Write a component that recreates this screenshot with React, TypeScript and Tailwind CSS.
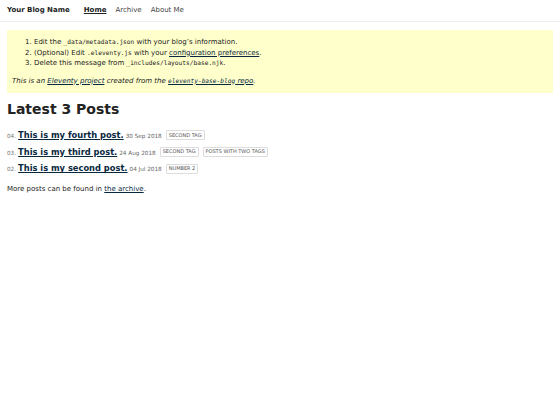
import React from 'react';

const posts = [
  { n: '04', title: 'This is my fourth post.', date: '30 Sep 2018', tags: ['second tag'] },
  { n: '03', title: 'This is my third post.', date: '24 Aug 2018', tags: ['second tag', 'posts with two tags'] },
  { n: '02', title: 'This is my second post.', date: '04 Jul 2018', tags: ['number 2'] },
];

export default function App() {
  return (
    <div className="min-h-screen bg-white text-[#222] font-['DejaVu_Sans',sans-serif] text-[7px] leading-[1.5]">
      {/* Header */}
      <header className="flex items-center h-[22px] px-[7px] border-b border-[#eee]">
        <a className="font-bold text-[#222] mr-[14px]">Your Blog Name</a>
        <nav className="flex gap-[9px]">
          <a className="font-bold underline text-[#222]">Home</a>
          <a className="text-[#444]">Archive</a>
          <a className="text-[#444]">About Me</a>
        </nav>
      </header>

      <main className="px-[7px]">
        {/* Warning box */}
        <div className="mt-[8px] bg-[#ffffcc] px-[5px] py-[7px]">
          <ol className="list-decimal pl-[22px]">
            <li>
              Edit the <code className="font-['DejaVu_Sans_Mono',monospace] text-[6.2px]">_data/metadata.json</code> with your blog’s information.
            </li>
            <li>
              (Optional) Edit <code className="font-['DejaVu_Sans_Mono',monospace] text-[6.2px]">.eleventy.js</code> with your{' '}
              <a className="underline text-[#082840]">configuration preferences</a>.
            </li>
            <li>
              Delete this message from <code className="font-['DejaVu_Sans_Mono',monospace] text-[6.2px]">_includes/layouts/base.njk</code>.
            </li>
          </ol>
          <p className="mt-[7px] italic">
            This is an <a className="underline text-[#082840]">Eleventy project</a> created from the{' '}
            <a className="underline text-[#082840]">
              <code className="font-['DejaVu_Sans_Mono',monospace] text-[6.2px]">eleventy-base-blog</code> repo
            </a>
            .
          </p>
        </div>

        <h1 className="mt-[7px] text-[14px] font-bold leading-[1.4]">Latest 3 Posts</h1>

        {/* Post list */}
        <ol className="mt-[8px] flex flex-col gap-[2px]">
          {posts.map((p) => (
            <li key={p.n} className="flex items-baseline leading-[1.8]">
              <span className="text-[5.7px] text-[#767676]">{p.n}.</span>
              <a className="pl-[2px] pr-[2px] text-[8.3px] font-bold underline text-[#082840]">{p.title}</a>
              <span className="text-[5.7px] text-[#666]">{p.date}</span>
              {p.tags.map((t) => (
                <span
                  key={t}
                  className="ml-[4px] self-center border border-[#ddd] rounded-[1px] px-[2px] h-[10px] flex items-center text-[5px] uppercase text-[#555] leading-none"
                >
                  {t}
                </span>
              ))}
            </li>
          ))}
        </ol>

        <p className="mt-[8px]">
          More posts can be found in <a className="underline text-[#082840]">the archive</a>.
        </p>
      </main>
    </div>
  );
}
